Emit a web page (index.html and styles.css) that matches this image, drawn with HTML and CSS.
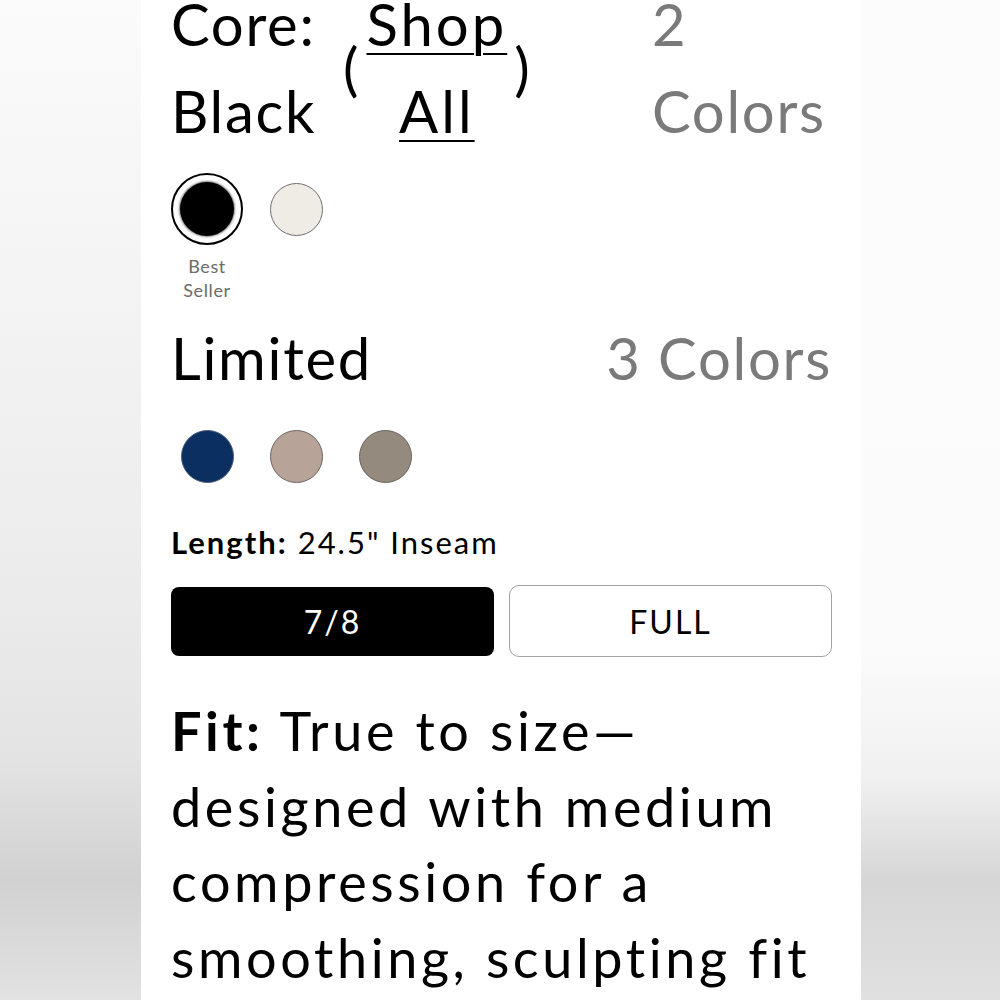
FILE: index.html
```html
<!DOCTYPE html>
<html lang="en">
<head>
<meta charset="utf-8">
<title>Product options</title>
<link rel="stylesheet" href="styles.css">
</head>
<body>
<main class="panel">
  <section class="color-head">
    <div class="col-name">Core: Black</div>
    <div class="col-shop">
      <span class="paren">(</span>
      <a class="shop-link" href="#">Shop<br>All</a>
      <span class="paren">)</span>
    </div>
    <div class="col-count">2 Colors</div>
  </section>

  <div class="swatches">
    <div class="swatch-item">
      <div class="swatch-box"><span class="ring"><span class="dot dot-black"></span></span></div>
      <div class="swatch-label">Best<br>Seller</div>
    </div>
    <div class="swatch-item">
      <div class="swatch-box"><span class="dot dot-cream"></span></div>
    </div>
  </div>

  <section class="limited-head">
    <div class="limited-name">Limited</div>
    <div class="limited-count">3 Colors</div>
  </section>

  <div class="swatches">
    <div class="swatch-item">
      <div class="swatch-box"><span class="dot dot-navy"></span></div>
    </div>
    <div class="swatch-item">
      <div class="swatch-box"><span class="dot dot-beige"></span></div>
    </div>
    <div class="swatch-item">
      <div class="swatch-box"><span class="dot dot-taupe"></span></div>
    </div>
  </div>

  <p class="length"><strong>Length:</strong> 24.5" Inseam</p>

  <div class="length-options">
    <button class="opt opt-active" type="button">7/8</button>
    <button class="opt" type="button">FULL</button>
  </div>

  <p class="fit"><strong>Fit:</strong> True to size—designed with medium compression for a smoothing, sculpting fit</p>
</main>
</body>
</html>
```
FILE: styles.css
```css
html, body {
  margin: 0;
  padding: 0;
  height: 100%;
  overflow: hidden;
}

body {
  font-family: Lato, "Open Sans", sans-serif;
  color: #000;
  background:
    linear-gradient(to bottom, #fbfbfb 0%, #f3f2f2 35%, #ebebeb 60%, #e3e3e3 76%, #d1d1d1 88%, #e2e2e2 100%) left top / 141px 100% no-repeat,
    linear-gradient(to bottom, #fcfcfc 0%, #fbfbfb 65%, #f0f0f0 78%, #d6d6d6 88%, #e0e0e0 100%) right top / 140px 100% no-repeat,
    #fbfbfb;
}

.panel {
  width: 720px;
  height: 1000px;
  margin-left: 141px;
  box-sizing: border-box;
  padding: 0 29px 0 30px;
  background: #fff;
  overflow: hidden;
}

/* header row */
.color-head {
  display: flex;
  align-items: center;
  margin-top: -20px;
  font-size: 58px;
  line-height: 87px;
  letter-spacing: 1.7px;
}

.col-name {
  width: 172px;
}

.col-shop {
  display: flex;
  align-items: center;
}

.paren {
  display: block;
  letter-spacing: 0;
}

.shop-link {
  display: block;
  text-align: center;
  color: #000;
  letter-spacing: 3px;
  text-decoration: underline;
  text-decoration-thickness: 2px;
  text-underline-offset: 7px;
  margin: 0 7px 0 8px;
}

.col-count {
  width: 180px;
  margin-left: auto;
  color: #7a7a7a;
}

/* swatches */
.swatches {
  display: flex;
  gap: 17px;
  margin-top: 19px;
}

.swatch-item {
  width: 72px;
  display: flex;
  flex-direction: column;
  align-items: center;
}

.swatch-box {
  width: 72px;
  height: 72px;
  display: flex;
  align-items: center;
  justify-content: center;
}

.ring {
  width: 72px;
  height: 72px;
  box-sizing: border-box;
  border: 2px solid #000;
  border-radius: 50%;
  display: flex;
  align-items: center;
  justify-content: center;
}

.dot {
  display: block;
  width: 53px;
  height: 53px;
  box-sizing: border-box;
  border-radius: 50%;
  border: 1.5px solid #777;
}

.dot-black {
  width: 54px;
  height: 54px;
  background: #000;
  border: none;
  box-shadow: 0 0 2px 1px rgba(0, 0, 0, 0.5);
}

.dot-cream {
  background: #efece6;
  border-color: #6f6f6f;
}

.dot-navy {
  background: #0b2f61;
  border-color: #48597a;
}

.dot-beige {
  background: #b8a398;
  border-color: #6d6361;
}

.dot-taupe {
  background: #948a7d;
  border-color: #68615c;
}

.swatch-label {
  margin-top: 9px;
  font-size: 18px;
  line-height: 24px;
  letter-spacing: 0.6px;
  color: #6b6b6b;
  text-align: center;
  white-space: nowrap;
}

/* limited row */
.limited-head {
  display: flex;
  justify-content: space-between;
  margin-top: 12px;
  font-size: 58px;
  line-height: 87px;
  letter-spacing: 1.7px;
}

.limited-count {
  color: #7a7a7a;
  padding-left: 0;
}

/* length */
.length {
  margin: 32px 0 0;
  font-size: 31px;
  line-height: 36px;
  letter-spacing: 2px;
}

.length strong {
  font-weight: 700;
}

.length-options {
  display: grid;
  grid-template-columns: 1fr 1fr;
  gap: 15px;
  margin-top: 25px;
}

.opt {
  height: 72px;
  box-sizing: border-box;
  font-family: inherit;
  font-size: 32px;
  letter-spacing: 2px;
  color: #000;
  background: #fff;
  border: 1.5px solid #a3a3a3;
  border-radius: 10px;
  padding: 0;
}

.opt-active {
  height: 69px;
  margin: 2px 0;
  background: #000;
  color: #fff;
  border: none;
  border-radius: 8px;
}

/* fit */
.fit {
  margin: 35px 0 0;
  font-size: 54px;
  line-height: 75.5px;
  letter-spacing: 3.6px;
}

.fit strong {
  font-weight: 700;
}
```
